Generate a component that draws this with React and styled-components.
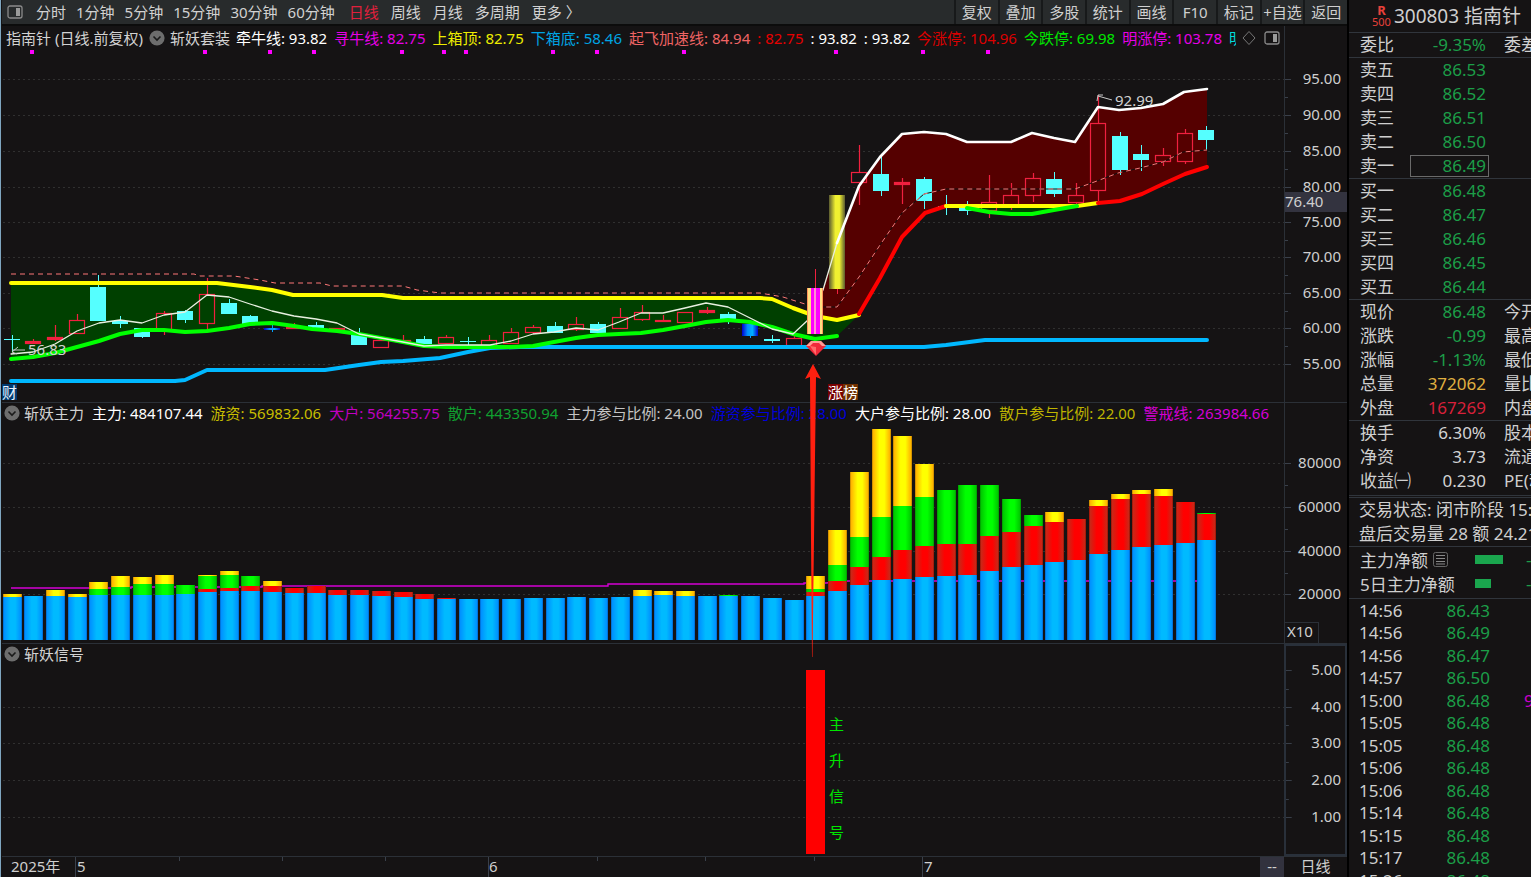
import React from "react";
import styled, { createGlobalStyle, css } from "styled-components";

const Global = createGlobalStyle`
  *, *::before, *::after { box-sizing: border-box; }
  html, body { margin: 0; background: #000; }
  body {
    font-family: "Noto Sans", "Noto Sans CJK SC", sans-serif;
    font-size: 15px;
    color: #cfcfcf;
    overflow: hidden;
  }
  button { font: inherit; color: inherit; background: none; border: 0; padding: 0; cursor: pointer; white-space: nowrap; }
`;

const C = {
  bg: "#151314",
  line: "#2b3037",
  bar: "#282b2c",
  text: "#d2d2d2",
  green: "#1c9e48",
  red: "#e0203c",
  cyan: "#55ffff",
  candle: "#f0203f",
  sky: "#00b8ff",
};

/* ---------- page frame ---------- */

const Page = styled.div`
  display: grid;
  grid-template-columns: minmax(0, 1fr) 182px;
  height: 100vh;
  min-height: 620px;
`;

const Main = styled.main`
  position: relative;
  display: grid;
  grid-template-rows: 26px 376fr 241fr 213fr 21px;
  min-width: 0;
  padding-left: 1px;
  border-left: 1px solid #7fa6c0;
  border-right: 2px solid #000;
  background: ${C.bg};
`;

/* ---------- toolbar ---------- */

const Toolbar = styled.nav`
  display: flex;
  align-items: stretch;
  background: ${C.bar};
  border-bottom: 2px solid #0c0c0c;
  line-height: 24px;
  overflow: hidden;
`;

const Periods = styled.div`
  display: flex;
  align-items: center;
  gap: ${(p) => p.$gap}px;
  padding-left: ${(p) => p.$pad}px;
`;

const Period = styled.button`
  color: ${(p) => (p.$active ? C.red : C.text)};
`;

const Actions = styled.div`
  display: grid;
  grid-template-columns: repeat(9, 1fr);
  width: 393px;
  flex: none;
  margin-left: auto;
`;

const Action = styled.button`
  border-left: 2px solid #17191a;
  overflow: hidden;
`;

/* ---------- chart panels ---------- */

const Panel = styled.section`
  display: grid;
  grid-template-columns: minmax(0, 1fr) 63px;
  min-height: 0;
  ${(p) => p.$ruled && css`border-top: 1px solid ${C.line};`}
`;

const Body = styled.div`
  display: flex;
  flex-direction: column;
  min-width: 0;
  min-height: 0;
`;

const Legend = styled.header`
  display: flex;
  align-items: flex-start;
  gap: ${(p) => p.$gap}px;
  height: ${(p) => p.$h}px;
  flex: none;
  padding-left: ${(p) => (p.$main ? 4 : 2)}px;
  padding-top: ${(p) => (p.$main ? 2 : 0)}px;
  white-space: nowrap;
  line-height: 20px;
`;

const PanelName = styled.button`
  display: flex;
  align-items: center;
  gap: ${(p) => p.$gap}px;
  height: 20px;
`;

const Reading = styled.span`
  color: ${(p) => p.$c || C.text};
`;

const LegendClip = styled.div`
  display: flex;
  gap: 7px;
  width: 1003px;
  overflow: hidden;
`;

const LegendTools = styled.div`
  display: flex;
  align-items: center;
  gap: 8px;
  height: 20px;
  margin-left: auto;
  padding-right: 4px;
`;

const Plot = styled.div`
  position: relative;
  flex: 1;
  min-height: 0;
`;

const Canvas = styled.svg`
  position: absolute;
  inset: 0;
  display: block;
  width: 100%;
  height: 100%;
`;

const Mark = styled.span`
  position: absolute;
  line-height: 16px;
  white-space: nowrap;
  transform: translateY(-50%);
  color: ${(p) => p.$c || C.text};
  background: ${(p) => p.$bg || "none"};
`;

const Axis = styled.div`
  position: relative;
  border-left: 1px solid ${C.line};
  ${(p) =>
    p.$boxed &&
    css`
      border: 2px solid #29303a;
    `}
`;

const AxisLabel = styled.span`
  position: absolute;
  right: ${(p) => (p.$boxed ? 4 : 6)}px;
  line-height: 20px;
  transform: translateY(-50%);
`;

const Cursor = styled.span`
  position: absolute;
  left: 0;
  right: 0;
  height: 20px;
  line-height: 18px;
  transform: translateY(-50%);
  background: #33333f;
`;

const Unit = styled.span`
  position: absolute;
  left: 0;
  bottom: 0;
  width: 34px;
  height: 21px;
  line-height: 16px;
  padding-left: 2px;
  border: solid ${C.line};
  border-width: 1px 1px 0 0;
`;

const Dates = styled.footer`
  display: grid;
  grid-template-columns: minmax(0, 1fr) 24px 63px;
  line-height: 18px;
  border-top: 1px solid ${C.line};
`;

const DateTrack = styled.div`
  position: relative;
`;

const DateLabel = styled.span`
  position: absolute;
  top: 0;
`;

const DateCell = styled.span`
  text-align: center;
  background: ${(p) => (p.$lit ? "#32323e" : "none")};
`;

const Overlay = styled.svg`
  position: absolute;
  inset: 0;
  width: 100%;
  height: 100%;
  pointer-events: none;
`;

/* ---------- quote sidebar ---------- */

const Side = styled.aside`
  display: flex;
  flex-direction: column;
  min-height: 0;
  overflow: hidden;
  background: ${C.bg};
  font-size: 17px;
`;

const Title = styled.h1`
  display: flex;
  align-items: center;
  gap: 3px;
  flex: none;
  height: 32px;
  margin: 0;
  padding-left: 23px;
  font-size: 19px;
  font-weight: 400;
  line-height: 28px;
  white-space: nowrap;
`;

const Badge = styled.span`
  display: grid;
  color: #e8413a;
  font-size: 11px;
  line-height: 12px;
  text-align: center;
`;

const Letter = styled.b`
  font-size: 13px;
  line-height: 12px;
`;

const Block = styled.section`
  flex: none;
  border-top: 1px solid #30353c;
  padding-bottom: ${(p) => p.$pb || 0}px;
  ${(p) => p.$thick && css`border-top: 3px double #30353c;`}
`;

const Table = styled.table`
  width: 100%;
  table-layout: fixed;
  border-collapse: collapse;
`;

const Row = styled.tr`
  height: 24px;
  line-height: 24px;
`;

const Name = styled.th`
  width: 61px;
  padding: 0 0 0 11px;
  font-weight: 400;
  text-align: left;
  white-space: nowrap;
`;

const Value = styled.td`
  width: 79px;
  padding: 0;
  text-align: right;
  color: ${(p) => p.$c || C.text};
`;

const Boxed = styled.span`
  display: block;
  height: 22px;
  line-height: 19px;
  padding-right: 2px;
  border: 1px solid #6a6a6a;
`;

const Padded = styled.span`
  padding-right: 3px;
`;

const Next = styled.td`
  padding: 0 0 0 15px;
  white-space: nowrap;
  overflow: hidden;
`;

const Note = styled.p`
  margin: 0;
  padding-left: 10px;
  line-height: 24px;
  white-space: nowrap;
  overflow: hidden;
`;

const Flow = styled.div`
  display: flex;
  align-items: center;
  height: 24px;
  padding-left: 11px;
  white-space: nowrap;
`;

const FlowName = styled.span`
  display: flex;
  align-items: center;
  gap: 5px;
  width: 115px;
  flex: none;
`;

const FlowBar = styled.span`
  display: block;
  height: 9px;
  background: #1aa64e;
`;

const FlowTrack = styled.span`
  width: 51px;
  flex: none;
`;

const FlowValue = styled.span`
  color: ${C.green};
`;

const Tick = styled.tr`
  height: 23px;
  line-height: 22px;
  &:nth-child(even) { height: 22px; }
`;

const TickTime = styled.td`
  width: 60px;
  padding: 0 0 0 10px;
`;

const TickPrice = styled.td`
  width: 81px;
  padding: 0;
  text-align: right;
  color: ${C.green};
`;

const TickVolume = styled.td`
  padding: 0 0 0 34px;
  color: #c800c8;
  white-space: nowrap;
  overflow: hidden;
`;

/* ---------- icons ---------- */

const PaneIcon = () => (
  <svg width="16" height="16" viewBox="0 0 16 16" fill="none" aria-hidden="true">
    <rect x="1" y="2" width="14" height="12" rx="2" stroke="#8a8a8a" strokeWidth="1.3" />
    <rect x="9" y="4" width="4" height="8" fill="#9a9a9a" />
  </svg>
);

const Fold = () => (
  <svg width="16" height="16" viewBox="0 0 16 16" aria-hidden="true">
    <circle cx="8" cy="8" r="7.6" fill="#6d6d6d" />
    <path d="M4.5 6.5 8 10l3.5-3.5" fill="none" stroke="#1a1a1a" strokeWidth="1.6" />
  </svg>
);

const Diamond = () => (
  <svg width="14" height="16" viewBox="0 0 14 16" aria-hidden="true">
    <path d="M7 1.5 13 8l-6 6.5L1 8z" fill="none" stroke="#777" />
  </svg>
);

const ListIcon = () => (
  <svg width="15" height="15" viewBox="0 0 15 15" fill="none" stroke="#888" aria-hidden="true">
    <rect x=".5" y=".5" width="14" height="14" rx="2" stroke="#666" />
    <path d="M3 3.5h9M3 6.5h9M3 9.5h9M3 12h9" />
  </svg>
);

/* ---------- data ---------- */

const X0 = 11.5;
const STEP = 21.727;
const cx = (i) => Math.round(X0 + STEP * i);

// kind, body top, body bottom, high, low
const candles = [
  ["d", 339, 340, 335, 352], ["r", 341, 343, 339, 343], ["r", 337, 339, 325, 341], ["r", 320, 333, 314, 333],
  ["d", 287, 321, 275, 321], ["d", 321, 324, 316, 328], ["d", 328, 337, 328, 338], ["r", 313, 330, 311, 335],
  ["d", 311, 320, 310, 323], ["r", 294, 323, 278, 329], ["d", 303, 314, 299, 314], ["d", 316, 325, 315, 325],
  ["b", 328, 330, 325, 332], ["r", 327, 328, 323, 329], ["d", 325, 328, 322, 328], ["r", 328, 328, 328, 329],
  ["d", 334, 345, 328, 345], ["r", 340, 347, 340, 347], ["r", 340, 340, 335, 341], ["d", 339, 344, 336, 344],
  ["r", 337, 343, 335, 343], ["d", 341, 342, 337, 345], ["r", 340, 345, 335, 345], ["r", 332, 343, 328, 343],
  ["r", 327, 332, 325, 334], ["d", 326, 333, 322, 333], ["r", 324, 329, 317, 331], ["d", 324, 333, 322, 334],
  ["r", 317, 328, 308, 329], ["r", 312, 319, 305, 321], ["r", 320, 320, 315, 321], ["r", 312, 322, 312, 322],
  ["r", 310, 312, 307, 314], ["d", 314, 320, 312, 324], ["b", 324, 336, 324, 338], ["d", 339, 341, 335, 343],
  ["r", 338, 345, 336, 345], ["m", 288, 334, 269, 334], ["y", 195, 289, 195, 294], ["r", 172, 182, 145, 205],
  ["d", 174, 191, 154, 196], ["r", 182, 184, 178, 204], ["d", 179, 201, 177, 209], ["d", 206, 206, 195, 215],
  ["d", 208, 211, 201, 215], ["r", 202, 210, 175, 218], ["r", 195, 206, 183, 210], ["r", 178, 195, 173, 202],
  ["d", 179, 194, 172, 197], ["r", 195, 202, 183, 204], ["r", 123, 190, 95, 203], ["d", 136, 170, 132, 175],
  ["d", 154, 160, 145, 171], ["r", 155, 161, 148, 166], ["r", 133, 161, 129, 164], ["d", 130, 140, 126, 150],
];

// tops of the stacked layers: blue, red, green, yellow (0 = layer absent)
const stacks = [
  [597, 0, 0, 594], [596, 0, 0, 0], [596, 0, 0, 590], [597, 0, 0, 594], [595, 0, 589, 582], [595, 0, 587, 576],
  [595, 0, 584, 577], [595, 0, 584, 575], [594, 0, 585, 0], [592, 589, 576, 575], [591, 588, 575, 571],
  [591, 586, 576, 0], [592, 586, 0, 581], [593, 588, 0, 0], [593, 586, 0, 0], [595, 590, 0, 0], [595, 590, 0, 0],
  [596, 591, 0, 0], [597, 592, 0, 0], [599, 594, 0, 0], [599, 598, 0, 0], [599, 0, 0, 0], [599, 0, 0, 0],
  [599, 0, 0, 0], [598, 0, 0, 0], [598, 0, 0, 0], [597, 0, 0, 0], [598, 0, 0, 0], [597, 0, 0, 0],
  [596, 0, 0, 590], [595, 0, 0, 591], [596, 0, 0, 591], [596, 0, 0, 0], [596, 0, 595, 0], [596, 0, 0, 0],
  [598, 0, 0, 0], [600, 0, 0, 0], [596, 592, 589, 576], [591, 581, 565, 530], [585, 567, 537, 472],
  [580, 557, 517, 429], [579, 550, 506, 436], [577, 546, 497, 464], [576, 544, 490, 0], [575, 544, 485, 0],
  [571, 536, 485, 0], [567, 532, 499, 0], [565, 526, 515, 0], [562, 522, 0, 512], [560, 519, 0, 0],
  [554, 506, 0, 500], [550, 499, 0, 494], [547, 494, 0, 490], [545, 496, 0, 489], [543, 502, 0, 0], [540, 514, 513, 0],
];

const YELLOW_A = "11,283 217,283 250,287 272,290 293,295 382,295 403,298 760,298 772,299 793,308 815,316 837,320 859,315";
const GREEN_A =
  "11,359 33,357 55,353 77,347 99,341 120,334 142,330 164,330 185,332 207,331 229,328 250,324 272,323 294,326 312,329 337,331 359,334 381,338 403,342 424,346 446,347 511,347 533,346 554,342 576,338 598,335 619,334 641,333 663,330 685,326 706,322 728,320 750,322 772,327 793,334 815,339 837,336";
const RED_A = "859,314 880,278 902,237 925,213 946,206";
const YELLOW_B = "946,206 1077,206 1098,203";
const RED_B = "1098,203 1120,201 1142,194 1163,184 1185,174 1207,167";
const GREEN_B = "967,208 989,212 1011,214 1032,214 1054,210 1077,206";
const WHITE_A =
  "11,354 33,352 55,344 77,331 99,323 120,320 142,323 164,315 185,312 207,295 229,297 250,304 272,311 294,316 316,319 337,323 359,334 381,338 403,342 424,346 446,345 490,345 511,341 533,334 554,332 576,328 598,330 619,322 641,313 663,313 685,308 706,303 728,307 750,318 772,329 793,334 808,320 823,290 837,243";
const WHITE_B =
  "837,243 859,186 880,157 902,134 924,132 946,134 967,142 1011,142 1032,133 1054,138 1075,142 1098,107 1119,110 1141,108 1163,104 1184,92 1207,89";
const PINK =
  "11,274 194,274 200,276 234,276 260,280 275,283 320,283 332,286 403,286 417,290 440,293 760,293 783,297 808,305 823,307 837,307 859,277 880,245 902,213 924,194 946,189 1075,189 1097,181 1118,173 1140,168 1163,162 1183,152 1207,150";
const BLUE =
  "11,381 175,381 185,380 207,370 325,370 359,365 381,362 403,361 440,358 468,352 490,348 520,347 924,347 946,345 985,340 1207,340";
const WARN = "11,588 131,588 131,587 262,587 262,586 608,586 608,584 804,584 804,583 826,583 848,581 1207,581";

const reverse = (s) => s.split(" ").reverse().join(" ");

const VIEW = { x: 2, w: 1282 };
const at = (v, from, size) => `${((v - from) / size) * 100}%`;

const price = {
  y: 50, h: 352,
  ticks: [[79, "95.00"], [115, "90.00"], [151, "85.00"], [187, "80.00"], [222, "75.00"], [257, "70.00"], [293, "65.00"], [328, "60.00"], [364, "55.00"]],
};
const force = { y: 424, h: 219, ticks: [[463, "80000"], [507, "60000"], [551, "40000"], [594, "20000"]] };
const signal = { y: 665, h: 191, ticks: [[670, "5.00"], [707, "4.00"], [743, "3.00"], [780, "2.00"], [817, "1.00"]] };

const minutes = ["分时", "1分钟", "5分钟", "15分钟", "30分钟", "60分钟"];
const days = ["日线", "周线", "月线", "多周期", "更多 〉"];
const actions = ["复权", "叠加", "多股", "统计", "画线", "F10", "标记", "+自选", "返回"];

const priceLegend = [
  ["牵牛线: 93.82", "#fff"], ["寻牛线: 82.75", "#e600e6"], ["上箱顶: 82.75", "#eded00"], ["下箱底: 58.46", "#00a4e4"],
  ["起飞加速线: 84.94", "#ef6464"], [": 82.75", "#e60000"], [": 93.82", "#fff"], [": 93.82", "#fff"],
  ["今涨停: 104.96", "#dc0000"], ["今跌停: 69.98", "#00e600"], ["明涨停: 103.78", "#e600e6"], ["明跌停: 69.18", "#00dcdc"],
];
const forceLegend = [
  ["主力: 484107.44", "#fff"], ["游资: 569832.06", "#c8be00"], ["大户: 564255.75", "#c000c0"],
  ["散户: 443350.94", "#10a030"], ["主力参与比例: 24.00", "#c4c4c4"], ["游资参与比例: 28.00", "#0000dc"],
  ["大户参与比例: 28.00", "#fff"], ["散户参与比例: 22.00", "#beb400"], ["警戒线: 263984.66", "#d400d4"],
];

const G = C.green;
const quoteBlocks = [
  [["委比", "-9.35%", G, "委差"]],
  [["卖五", "86.53", G], ["卖四", "86.52", G], ["卖三", "86.51", G], ["卖二", "86.50", G], ["卖一", "86.49", G, "", true]],
  [["买一", "86.48", G], ["买二", "86.47", G], ["买三", "86.46", G], ["买四", "86.45", G], ["买五", "86.44", G]],
  [["现价", "86.48", G, "今开"], ["涨跌", "-0.99", G, "最高"], ["涨幅", "-1.13%", G, "最低"], ["总量", "372062", "#e0b040", "量比"], ["外盘", "167269", "#d8203a", "内盘"]],
  [["换手", "6.30%", C.text, "股本"], ["净资", "3.73", C.text, "流通"], ["收益㈠", "0.230", C.text, "PE(动)"]],
];

const trades = [
  ["14:56", "86.43"], ["14:56", "86.49"], ["14:56", "86.47"], ["14:57", "86.50"], ["15:00", "86.48", "9"], ["15:05", "86.48"],
  ["15:05", "86.48"], ["15:06", "86.48"], ["15:06", "86.48"], ["15:14", "86.48"], ["15:15", "86.48"], ["15:17", "86.48"], ["15:26", "86.48"],
];

/* ---------- chart parts ---------- */

const Grid = ({ ticks }) => (
  <g stroke="#303030" strokeDasharray="2 3">
    {ticks.map(([y]) => <line key={y} x1="3" x2="1284" y1={y + 0.5} y2={y + 0.5} />)}
  </g>
);

const Candle = ({ i, d: [kind, top, bottom, high, low] }) => {
  const x = cx(i);
  const h = Math.max(bottom - top, 1);
  if (kind === "r")
    return (
      <g stroke={C.candle} fill="none" strokeWidth="1.2">
        <path d={`M${x + 0.5} ${high}V${top}M${x + 0.5} ${bottom}V${low}`} />
        <rect x={x - 7.5} y={top + 0.5} width="15" height={h} fill={h < 3 ? C.candle : "none"} />
      </g>
    );
  const fill = { d: C.cyan, b: "url(#deep)", m: "url(#hot)", y: "url(#gold)" }[kind];
  const wick = kind === "d" ? C.cyan : kind === "b" ? "#00a0ff" : C.candle;
  return (
    <g>
      <path d={`M${x + 0.5} ${high}V${low}`} stroke={wick} />
      <rect x={x - 8} y={top} width="16" height={h} fill={fill} />
    </g>
  );
};

const Scale = ({ panel, boxed, offset = 0, height, children }) => {
  const start = panel.y - offset;
  return (
    <Axis $boxed={boxed}>
      <Canvas viewBox={`0 ${start} 62 ${height}`} preserveAspectRatio="none" stroke="#3a404a">
        {panel.ticks.map(([y], k) => {
          const next = panel.ticks[k + 1];
          return (
            <path key={y} d={`M0 ${y + 0.5}h6${next ? `M0 ${Math.round((y + next[0]) / 2) + 0.5}h3` : ""}`} />
          );
        })}
      </Canvas>
      {panel.ticks.map(([y, label]) => (
        <AxisLabel key={label} $boxed={boxed} style={{ top: at(y - 1, start, height) }}>{label}</AxisLabel>
      ))}
      {children}
    </Axis>
  );
};

const Defs = () => (
  <defs>
    <linearGradient id="deep"><stop offset="0" stopColor="#0000d0" /><stop offset=".35" stopColor="#0090ff" /><stop offset=".65" stopColor="#00b0ff" /><stop offset="1" stopColor="#0000d0" /></linearGradient>
    <linearGradient id="hot">
      <stop offset="0" stopColor="#ff4030" /><stop offset=".06" stopColor="#ffe080" /><stop offset=".22" stopColor="#ffe080" />
      <stop offset=".22" stopColor="#ff00ff" /><stop offset=".46" stopColor="#ff00ff" /><stop offset=".46" stopColor="#ff90d0" />
      <stop offset=".54" stopColor="#ff90d0" /><stop offset=".54" stopColor="#ff00ff" /><stop offset=".8" stopColor="#ff00ff" />
      <stop offset=".8" stopColor="#ffe080" /><stop offset=".94" stopColor="#ffe080" /><stop offset="1" stopColor="#ff4030" />
    </linearGradient>
    <linearGradient id="gold"><stop offset="0" stopColor="#5a5a30" /><stop offset=".4" stopColor="#f0f030" /><stop offset=".65" stopColor="#f0f030" /><stop offset="1" stopColor="#5a5a30" /></linearGradient>
  </defs>
);

const PricePlot = () => (
  <Plot>
    <Canvas viewBox={`${VIEW.x} ${price.y} ${VIEW.w} ${price.h}`} preserveAspectRatio="none">
      <Defs />
      <Grid ticks={price.ticks} />
      {[32, 205, 270, 314, 402, 444, 466, 553, 597, 684, 836, 923, 988].map((x) => (
        <rect key={x} x={x - 2} y="50" width="4" height="4" fill="#f0f" />
      ))}
      <polygon fill="#004000" points={`${YELLOW_A} ${reverse(GREEN_A)}`} />
      <polygon fill="#550000" points={`818,305 823,290 ${WHITE_B} ${reverse(RED_B)} ${reverse(YELLOW_B)} ${reverse(RED_A)} 837,320 815,316`} />
      <polygon fill="#004000" points={`946,206 ${GREEN_B}`} />
      {candles.map((d, i) => (i === 37 || i === 38 ? null : <Candle key={i} i={i} d={d} />))}
      <Candle i={38} d={candles[38]} />
      <g fill="none" strokeLinejoin="round" strokeLinecap="round">
        <polyline points={PINK} stroke="#101010" strokeWidth="1" strokeLinecap="butt" />
        <polyline points={PINK} stroke="#ff7878" strokeDasharray="5 4" strokeLinecap="butt" />
        <polyline points={BLUE} stroke={C.sky} strokeWidth="4" />
        <g strokeWidth="4">
          <polyline points={YELLOW_A} stroke="#ff0" />
          <polyline points={GREEN_A} stroke="#0f0" />
          <polyline points={RED_A} stroke="#f00" />
          <polyline points={YELLOW_B} stroke="#ff0" />
          <polyline points={RED_B} stroke="#f00" />
          <polyline points={GREEN_B} stroke="#0f0" />
        </g>
        <polyline points={WHITE_A} stroke="#e8f0e0" strokeWidth="1.3" />
        <polyline points={WHITE_B} stroke="#fff" strokeWidth="2.6" />
      </g>
      <Candle i={37} d={candles[37]} />
      <g>
        <path d="M811 341h10l5 5-10 10-10-10z" fill="#f02a3a" />
        <path d="M811 341h10l5 5h-4l-3-3h-6l-3 3h-4z" fill="#ff9c96" />
        <path d="m810 346 6 9v-8z" fill="#ff6a6a" />
      </g>
      <g stroke="#c8c8c8" fill="none">
        <path d="M1112 100 1098 96M1097 101l1-6h5" />
        <path d="M25 350H12M18 347l-6 5 5 2" />
      </g>
    </Canvas>
    <Mark style={{ left: at(28, VIEW.x, VIEW.w), top: at(349, price.y, price.h) }}>56.83</Mark>
    <Mark style={{ left: at(1115, VIEW.x, VIEW.w), top: at(100, price.y, price.h) }}>92.99</Mark>
    <Mark $c="#e8f4ff" $bg="#003a70" style={{ left: 0, top: at(392, price.y, price.h) }}>财</Mark>
    <Mark $c="#fff" $bg="#780000" style={{ left: at(828, VIEW.x, VIEW.w), top: at(392, price.y, price.h) }}>涨</Mark>
    <Mark $c="#fff" $bg="#703000" style={{ left: at(843, VIEW.x, VIEW.w), top: at(392, price.y, price.h) }}>榜</Mark>
  </Plot>
);

const layerFill = ["url(#vb)", "url(#vr)", "url(#vg)", "url(#vy)"];

const Stack = ({ i, tops }) => {
  let floor = 640;
  return (
    <g>
      {tops.map((top, k) => {
        if (!top) return null;
        const h = floor - top;
        floor = top;
        return <rect key={k} x={cx(i) - 9} y={top} width="19" height={h} fill={layerFill[k]} />;
      })}
    </g>
  );
};

const Shade = ({ id, edge, side, mid }) => (
  <linearGradient id={id}>
    <stop offset="0" stopColor={edge} />
    <stop offset=".06" stopColor={side} />
    <stop offset=".4" stopColor={mid} />
    <stop offset=".65" stopColor={mid} />
    <stop offset=".94" stopColor={side} />
    <stop offset="1" stopColor={edge} />
  </linearGradient>
);

const ForcePlot = () => (
  <Plot>
    <Canvas viewBox={`${VIEW.x} ${force.y} ${VIEW.w} ${force.h}`} preserveAspectRatio="none">
      <defs>
        <Shade id="vb" edge="#0060c0" side="#0090ff" mid="#00baff" />
        <Shade id="vr" edge="#901000" side="#c82818" mid="#ff0000" />
        <Shade id="vg" edge="#009000" side="#00c800" mid="#00ff00" />
        <Shade id="vy" edge="#b07800" side="#ffb400" mid="#ffff00" />
      </defs>
      <Grid ticks={force.ticks} />
      <polyline points={WARN} fill="none" stroke="#d400d4" strokeWidth="1.4" />
      {stacks.map((tops, i) => <Stack key={i} i={i} tops={tops} />)}
    </Canvas>
  </Plot>
);

const SignalPlot = () => (
  <Plot>
    <Canvas viewBox={`${VIEW.x} ${signal.y} ${VIEW.w} ${signal.h}`} preserveAspectRatio="none">
      <Grid ticks={signal.ticks.slice(1)} />
      <rect x="806" y="670" width="19" height="184" fill="#f00" />
    </Canvas>
    {[..."主升信号"].map((ch, k) => (
      <Mark key={ch} $c="#00e600" style={{ left: at(829, VIEW.x, VIEW.w), top: at(724 + k * 36, signal.y, signal.h) }}>{ch}</Mark>
    ))}
  </Plot>
);

/* ---------- page ---------- */

export default function App() {
  return (
    <>
      <Global />
      <Page>
        <Main>
          <Toolbar>
            <Periods $gap={10} $pad={5}>
              <PaneIcon />
            </Periods>
            <Periods $gap={10} $pad={13}>
              {minutes.map((m) => <Period key={m}>{m}</Period>)}
            </Periods>
            <Periods $gap={12} $pad={14}>
              {days.map((d) => <Period key={d} $active={d === "日线"}>{d}</Period>)}
            </Periods>
            <Actions>
              {actions.map((a) => <Action key={a}>{a}</Action>)}
            </Actions>
          </Toolbar>

          <Panel>
            <Body>
              <Legend $main $h={24} $gap={6}>
                <Reading>指南针 (日线.前复权)</Reading>
                <PanelName $gap={5}>
                  <Fold />
                  <Reading>斩妖套装</Reading>
                </PanelName>
                <LegendClip>
                  {priceLegend.map(([t, c], k) => <Reading key={k} $c={c}>{t}</Reading>)}
                </LegendClip>
                <LegendTools>
                  <Diamond />
                  <PaneIcon />
                </LegendTools>
              </Legend>
              <PricePlot />
            </Body>
            <Scale panel={price} offset={24} height={376}>
              <Cursor style={{ top: at(202, 26, 376) }}>76.40</Cursor>
            </Scale>
          </Panel>

          <Panel $ruled>
            <Body>
              <Legend $h={21} $gap={8}>
                <PanelName $gap={4}>
                  <Fold />
                  <Reading>斩妖主力</Reading>
                </PanelName>
                {forceLegend.map(([t, c]) => <Reading key={t} $c={c}>{t}</Reading>)}
              </Legend>
              <ForcePlot />
            </Body>
            <Scale panel={force} offset={21} height={240}>
              <Unit>X10</Unit>
            </Scale>
          </Panel>

          <Panel $ruled>
            <Body>
              <Legend $h={21} $gap={5}>
                <PanelName $gap={4}>
                  <Fold />
                  <Reading>斩妖信号</Reading>
                </PanelName>
              </Legend>
              <SignalPlot />
            </Body>
            <Scale panel={signal} boxed offset={19} height={208} />
          </Panel>

          <Dates>
            <DateTrack>
              <Canvas viewBox="2 857 1258 20" preserveAspectRatio="none" stroke="#3a404a">
                <path d="M75.5 857v20M488.500 857v20M922.500 857v20M179.500 857v4M282.500 857v4M385.500 857v4M597.500 857v4M705.500 857v4M814.500 857v4" />
              </Canvas>
              <DateLabel style={{ left: at(11, 2, 1258) }}>2025年</DateLabel>
              <DateLabel style={{ left: at(77, 2, 1258) }}>5</DateLabel>
              <DateLabel style={{ left: at(489, 2, 1258) }}>6</DateLabel>
              <DateLabel style={{ left: at(924, 2, 1258) }}>7</DateLabel>
            </DateTrack>
            <DateCell $lit>--</DateCell>
            <DateCell>日线</DateCell>
          </Dates>

          <Overlay viewBox="1 0 1346 877" preserveAspectRatio="none" aria-hidden="true">
            <path d="M813 364 821 379 816 377 814 540 812.500 657 812 657 811 540 810 377 805 379z" fill="#ff2010" />
          </Overlay>
        </Main>

        <Side>
          <Title>
            <Badge><Letter>R</Letter>500</Badge>
            300803 指南针
          </Title>
          {quoteBlocks.map((rows, b) => (
            <Block key={b} $pb={b === 4 ? 2 : 0}>
              <Table>
                <tbody>
                  {rows.map(([name, value, color, next, boxed]) => (
                    <Row key={name}>
                      <Name scope="row">{name}</Name>
                      <Value $c={color}>{boxed ? <Boxed>{value}</Boxed> : <Padded>{value}</Padded>}</Value>
                      <Next>{next}</Next>
                    </Row>
                  ))}
                </tbody>
              </Table>
            </Block>
          ))}
          <Block $thick>
            <Note>交易状态: 闭市阶段 15:30</Note>
            <Note>盘后交易量 28 额 24.21万</Note>
          </Block>
          <Block $pb={3}>
            <Flow>
              <FlowName>主力净额<ListIcon /></FlowName>
              <FlowTrack><FlowBar style={{ width: 28 }} /></FlowTrack>
              <FlowValue>-</FlowValue>
            </Flow>
            <Flow>
              <FlowName>5日主力净额</FlowName>
              <FlowTrack><FlowBar style={{ width: 16 }} /></FlowTrack>
              <FlowValue>-</FlowValue>
            </Flow>
          </Block>
          <Block>
            <Table>
              <tbody>
                {trades.map(([time, value, volume], k) => (
                  <Tick key={k}>
                    <TickTime>{time}</TickTime>
                    <TickPrice>{value}</TickPrice>
                    <TickVolume>{volume}</TickVolume>
                  </Tick>
                ))}
              </tbody>
            </Table>
          </Block>
        </Side>
      </Page>
    </>
  );
}
